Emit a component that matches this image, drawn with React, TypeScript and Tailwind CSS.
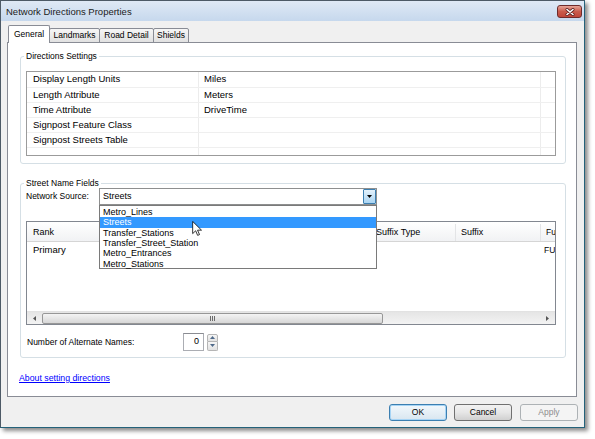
import React from 'react';

const settings = [
    { label: 'Display Length Units', value: 'Miles' },
    { label: 'Length Attribute', value: 'Meters' },
    { label: 'Time Attribute', value: 'DriveTime' },
    { label: 'Signpost Feature Class', value: '' },
    { label: 'Signpost Streets Table', value: '' },
];

const sources = ['Metro_Lines', 'Streets', 'Transfer_Stations', 'Transfer_Street_Station', 'Metro_Entrances', 'Metro_Stations'];

function Tab({ label, width, active }: { label: string; width: string; active?: boolean }) {
    if (active) {
        return (
            <div className={`${width} h-[18px] bg-white border border-b-0 border-[#898c95] rounded-t-[2px] flex items-start justify-center pt-[3px] text-[8.5px] leading-[11px]`}>
                {label}
            </div>
        );
    }
    return (
        <div className={`${width} h-[15px] -ml-[1px] bg-gradient-to-b from-[#f6f6f6] to-[#e1e1e1] border border-[#898c95] rounded-t-[2px] flex items-center justify-center text-[8.5px] leading-[11px]`}>
            {label}
        </div>
    );
}

function Button({ label, primary, disabled }: { label: string; primary?: boolean; disabled?: boolean }) {
    const cls = disabled
        ? 'border-[#adb2b5] bg-[#f4f4f4] text-[#8c8c8c]'
        : primary
            ? 'border-[#3c7fb1] bg-gradient-to-b from-[#f2f8fc] to-[#d9e6f0] shadow-[inset_0_0_0_1px_#a6d4f5]'
            : 'border-[#707070] bg-gradient-to-b from-[#f2f2f2] via-[#e6e6e6] to-[#d0d0d0]';
    return (
        <div className={`w-[58px] h-[17px] border rounded-[3px] flex items-center justify-center text-[8.5px] ${cls}`}>
            {label}
        </div>
    );
}

export default function App() {
    return (
        <div className="w-[595px] h-[439px] bg-white font-['Liberation_Sans',Arial,sans-serif] text-black">
            {/* Window */}
            <div className="w-[585px] h-[428px] flex flex-col bg-[#f0f0f0] border border-[#4d5a66] border-r-[#24627a] border-b-[#24627a] shadow-[3px_3px_4px_rgba(0,0,0,0.45)]">
                {/* Title bar */}
                <div className="h-[20px] flex items-center justify-between pl-[5px] pr-[2px] pt-[1px] bg-gradient-to-b from-[#dfe9f5] to-[#c6d8ed]">
                    <span className="text-[9.5px] leading-[12px] text-[#1b1b1b]">Network Directions Properties</span>
                    <div className="w-[25px] h-[13px] rounded-[3px] border border-[#6e2b2b] bg-gradient-to-b from-[#e6a498] via-[#c95b4c] to-[#c0463a] flex items-center justify-center">
                        <svg width="10" height="8" viewBox="0 0 10 8">
                            <path d="M2 1.5 L8 6.5 M8 1.5 L2 6.5" stroke="#5a2020" strokeWidth="3" strokeLinecap="round" />
                            <path d="M2 1.5 L8 6.5 M8 1.5 L2 6.5" stroke="#ffffff" strokeWidth="1.6" strokeLinecap="round" />
                        </svg>
                    </div>
                </div>

                <div className="flex flex-col px-[6px] pt-[4px]">
                    {/* Tabs */}
                    <div className="relative z-10 -mb-[1px] h-[18px] flex items-end pl-[1px]">
                        <Tab label="General" width="w-[42px]" active />
                        <Tab label="Landmarks" width="w-[51px]" />
                        <Tab label="Road Detail" width="w-[55px]" />
                        <Tab label="Shields" width="w-[36px]" />
                    </div>

                    {/* Panel */}
                    <div className="w-[570px] h-[355px] bg-white border border-[#898c95] flex flex-col">
                        {/* Directions Settings */}
                        <fieldset className="ml-[12px] mt-[8px] w-[546px] border border-[#d5dfe5] rounded-[3px] pl-[3px] pr-[9px] pb-[7px]">
                            <legend className="px-[2px] text-[8.5px] leading-[11px]">Directions Settings</legend>
                            <div className="ml-[2px] mt-[9px] h-[85px] border border-[#9b9b9b] flex flex-col overflow-hidden">
                                {settings.map((row, i) => (
                                    <div key={row.label} className={`${i === 0 ? 'h-[16px]' : 'h-[15px]'} shrink-0 flex border-b border-[#efefef] text-[9.5px]`}>
                                        <div className="w-[172px] pl-[6px] flex items-center border-r border-[#ececec]">{row.label}</div>
                                        <div className="w-[342px] pl-[5px] flex items-center border-r border-[#ececec]">{row.value}</div>
                                        <div className="flex-1" />
                                    </div>
                                ))}
                                <div className="flex-1 flex">
                                    <div className="w-[172px] border-r border-[#ececec]" />
                                    <div className="w-[342px] border-r border-[#ececec]" />
                                </div>
                            </div>
                        </fieldset>

                        {/* Street Name Fields */}
                        <fieldset className="ml-[12px] mt-[14px] w-[546px] border border-[#d5dfe5] rounded-[3px] pl-[3px] pr-[9px] pb-[6px]">
                            <legend className="px-[2px] text-[8.5px] leading-[11px]">Street Name Fields</legend>

                            <div className="h-[17px] flex items-center -mt-[1px]">
                                <span className="w-[75px] pl-[2px] text-[8.5px]">Network Source:</span>
                                <div className="relative w-[278px] h-[17px] border border-[#8e8f8f] bg-white flex items-center">
                                    <span className="flex-1 pl-[3px] text-[9px]">Streets</span>
                                    <div className="w-[13px] h-full border border-[#3c7fb1] rounded-[1px] bg-gradient-to-b from-[#e3f1fb] to-[#a9d4f2] flex items-center justify-center">
                                        <svg width="5" height="3" viewBox="0 0 5 3">
                                            <path d="M0 0 H5 L2.5 3 Z" fill="#000" />
                                        </svg>
                                    </div>

                                    {/* Open drop-down list */}
                                    <div className="absolute left-[-1px] top-[16px] z-20 w-[278px] h-[64px] border border-[#7a7a7a] bg-white pt-[1px]">
                                        {sources.map((s) => (
                                            <div
                                                key={s}
                                                className={`h-[10.3px] pl-[3px] flex items-center text-[9px] leading-[10px] ${s === 'Streets' ? 'bg-[#3399ff] text-white' : ''}`}
                                            >
                                                {s}
                                            </div>
                                        ))}
                                        <svg className="absolute left-[92px] top-[15px]" width="10" height="15" viewBox="0 0 12 19">
                                            <path d="M0.5 0.5 L0.5 16 L4.3 12.4 L6.8 18.2 L9.2 17.2 L6.7 11.6 L11.7 11.6 Z" fill="#fff" stroke="#000" strokeWidth="1" strokeLinejoin="round" />
                                        </svg>
                                    </div>
                                </div>
                            </div>

                            {/* Names grid */}
                            <div className="ml-[2px] mt-[16px] w-[530px] h-[104px] border border-[#828790] flex flex-col overflow-hidden">
                                <div className="h-[20px] shrink-0 flex bg-gradient-to-b from-white to-[#f1f2f4] border-b border-[#d5d5d5] text-[9px] pt-[2px]">
                                    <div className="w-[172px] shrink-0 pl-[6px] flex items-center border-r border-[#e3e4e6]">Rank</div>
                                    <div className="w-[172px] shrink-0 border-r border-[#e3e4e6]" />
                                    <div className="w-[85px] shrink-0 pl-[5px] flex items-center border-r border-[#e3e4e6]">Suffix Type</div>
                                    <div className="w-[85px] shrink-0 pl-[5px] flex items-center border-r border-[#e3e4e6]">Suffix</div>
                                    <div className="flex-1 pl-[5px] flex items-center text-[8.5px] whitespace-nowrap">Fu</div>
                                </div>
                                <div className="flex-1 bg-white">
                                    <div className="h-[17px] flex text-[9.5px]">
                                        <div className="w-[172px] shrink-0 pl-[6px] flex items-center">Primary</div>
                                        <div className="w-[172px] shrink-0" />
                                        <div className="w-[85px] shrink-0" />
                                        <div className="w-[85px] shrink-0" />
                                        <div className="flex-1 pl-[3px] flex items-center text-[8.5px] whitespace-nowrap">FU</div>
                                    </div>
                                </div>
                                {/* Horizontal scroll bar */}
                                <div className="h-[13px] shrink-0 flex items-center bg-gradient-to-b from-[#e5e5e5] to-[#f3f3f3] border-t border-[#e2e2e2]">
                                    <div className="w-[15px] h-full flex items-center justify-center">
                                        <svg width="3" height="5" viewBox="0 0 3 5"><path d="M3 0 V5 L0 2.5 Z" fill="#555" /></svg>
                                    </div>
                                    <div className="w-[341px] h-[11px] border border-[#979797] rounded-[2px] bg-gradient-to-b from-[#f4f4f4] to-[#d7d7d7] flex items-center justify-center gap-[1px]">
                                        <div className="w-[1px] h-[5px] bg-[#6b6b6b]" />
                                        <div className="w-[1px] h-[5px] bg-[#6b6b6b]" />
                                        <div className="w-[1px] h-[5px] bg-[#6b6b6b]" />
                                    </div>
                                    <div className="flex-1" />
                                    <div className="w-[15px] h-full flex items-center justify-center">
                                        <svg width="3" height="5" viewBox="0 0 3 5"><path d="M0 0 V5 L3 2.5 Z" fill="#555" /></svg>
                                    </div>
                                </div>
                            </div>

                            {/* Alternate names */}
                            <div className="mt-[8px] h-[18px] flex items-center">
                                <span className="w-[159px] pl-[3px] text-[8.5px]">Number of Alternate Names:</span>
                                <div className="w-[21px] h-[18px] border border-[#abadb3] border-t-[#8a8c92] bg-white flex items-center justify-end pr-[4px] text-[9px]">0</div>
                                <div className="ml-[3px] w-[11px] h-[17px] flex flex-col">
                                    <div className="h-[8.5px] border border-[#b5b5b5] rounded-t-[2px] bg-gradient-to-b from-[#f6f6f6] to-[#e2e2e2] flex items-center justify-center">
                                        <svg width="5" height="3" viewBox="0 0 5 3"><path d="M0 3 H5 L2.5 0 Z" fill="#4f6a8a" /></svg>
                                    </div>
                                    <div className="h-[8.5px] border border-t-0 border-[#b5b5b5] rounded-b-[2px] bg-gradient-to-b from-[#f6f6f6] to-[#e2e2e2] flex items-center justify-center">
                                        <svg width="5" height="3" viewBox="0 0 5 3"><path d="M0 0 H5 L2.5 3 Z" fill="#4f6a8a" /></svg>
                                    </div>
                                </div>
                            </div>
                        </fieldset>

                        <a className="ml-[11px] mt-[15px] w-fit text-[8.75px] leading-[11px] text-[#0000ff] underline">About setting directions</a>
                    </div>

                    {/* Dialog buttons */}
                    <div className="mt-[7px] flex justify-end">
                        <Button label="OK" primary />
                        <div className="w-[7px]" />
                        <Button label="Cancel" />
                        <div className="w-[8px]" />
                        <Button label="Apply" disabled />
                    </div>
                </div>
            </div>
        </div>
    );
}
